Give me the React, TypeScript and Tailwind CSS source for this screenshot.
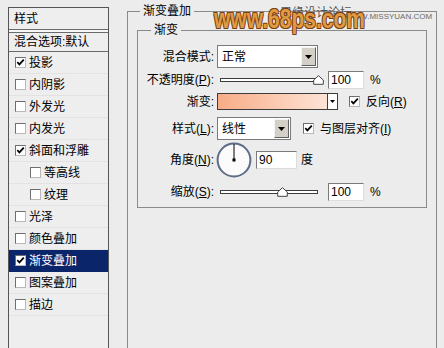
const items = [
  { t: "投影", on: true },
  { t: "内阴影" },
  { t: "外发光" },
  { t: "内发光" },
  { t: "斜面和浮雕", on: true },
  { t: "等高线", sub: true },
  { t: "纹理", sub: true },
  { t: "光泽" },
  { t: "颜色叠加" },
  { t: "渐变叠加", on: true, sel: true },
  { t: "图案叠加" },
  { t: "描边" },
];

const Check = ({ on }: { on?: boolean }) => (
  <span className="w-[11px] h-[11px] shrink-0 bg-white border border-t-[#6e6e6e] border-l-[#6e6e6e] border-r-[#b8b8b8] border-b-[#b8b8b8] flex items-center justify-center">
    {on && (
      <svg width="9" height="9" viewBox="0 0 9 9">
        <path d="M1.3 4.2 L3.4 6.4 L7.8 1.6" fill="none" stroke="#000" strokeWidth="1.7" />
      </svg>
    )}
  </span>
);

const Arrow = () => (
  <svg width="7" height="4" viewBox="0 0 7 4">
    <path d="M0 0 H7 L3.5 4 Z" fill="#000" />
  </svg>
);

const Select = ({ value, w }: { value: string; w: string }) => (
  <div className={`${w} h-[23px] bg-white border border-[#7a7a7a] flex items-center justify-between`}>
    <span className="pl-[4px]">{value}</span>
    <span className="w-[15px] h-[19px] mr-[1px] bg-[#d4d0c8] border border-t-[#f4f4f4] border-l-[#f4f4f4] border-r-[#606060] border-b-[#606060] flex items-center justify-center">
      <Arrow />
    </span>
  </div>
);

const Slider = ({ pos }: { pos: number }) => (
  <div className="relative w-[106px] h-[12px] flex items-center shrink-0">
    <div className="ml-[3px] w-[98px] h-[4px] bg-white border border-[#3c3c3c]" />
    <svg className="absolute top-[1px]" style={{ left: pos - 5 }} width="11" height="10" viewBox="0 0 11 10">
      <path d="M5.5 0.7 L10.3 5 V9.3 H0.7 V5 Z" fill="#fff" stroke="#444" strokeWidth="1" />
    </svg>
  </div>
);

const Field = ({ value, w }: { value: string; w: string }) => (
  <div className={`${w} h-[18px] bg-white border border-t-[#7a7a7a] border-l-[#7a7a7a] border-r-[#dcdcdc] border-b-[#dcdcdc] flex items-center pl-[2px] leading-[14px]`}>
    {value}
  </div>
);

const Label = ({ children }: { children: React.ReactNode }) => (
  <span className="w-[76px] mr-[3px] shrink-0 text-right">{children}</span>
);

export default function App() {
  return (
    <div className="relative w-[444px] h-[348px] overflow-hidden bg-[#ececec] flex items-start text-[12px] leading-[14px] text-black font-['Liberation_Sans','Noto_Sans_CJK_SC',sans-serif]">
      {/* style list */}
      <div className="ml-[8px] mt-[7px] w-[101px] h-[360px] shrink-0 bg-[#eeeeee] border border-[#555555] flex flex-col">
        <div className="h-[21px] flex items-center pl-[5px]">样式</div>
        <div className="h-[4px] bg-[#f6f6f6] border-y border-[#6a6a6a]" />
        <div className="h-[19px] flex items-center pl-[5px] border-b border-[#6a6a6a]">混合选项:默认</div>
        {items.map((it) => (
          <div
            key={it.t}
            className={`h-[22px] flex items-center gap-[3px] border-b ${
              it.sel ? "bg-[#0b256b] text-white border-[#0b256b]" : "border-[#e2e2e2]"
            } ${it.sub ? "pl-[21px]" : "pl-[6px]"}`}
          >
            <Check on={it.on} />
            <span>{it.t}</span>
          </div>
        ))}
      </div>

      {/* settings */}
      <fieldset className="ml-[18px] mt-[4px] w-[310px] h-[360px] shrink-0 border border-[#8a8a8a] px-[9px]">
        <legend className="ml-[3px] px-[3px] leading-[14px]">渐变叠加</legend>
        <fieldset className="mt-[5px] border border-[#8a8a8a] pt-[8px] pb-[7px] flex flex-col">
          <legend className="ml-[13px] px-[3px] leading-[14px]">渐变</legend>

          <div className="h-[23px] flex items-center">
            <Label>混合模式:</Label>
            <Select value="正常" w="w-[101px]" />
          </div>

          <div className="mt-[2px] h-[19px] flex items-center">
            <Label>
              不透明度(<span className="underline">P</span>):
            </Label>
            <Slider pos={101} />
            <span className="ml-[5px]">
              <Field value="100" w="w-[36px]" />
            </span>
            <span className="ml-[6px]">%</span>
          </div>

          <div className="mt-[4px] h-[17px] flex items-center">
            <Label>渐变:</Label>
            <div className="w-[121px] h-[17px] border border-[#3c3c3c] flex">
              <div className="flex-1 bg-gradient-to-r from-[#f7ac87] to-[#fde3d5]" />
              <div className="w-[10px] bg-white border-l border-[#3c3c3c] flex items-center justify-center">
                <svg width="5" height="3" viewBox="0 0 5 3">
                  <path d="M0 0 H5 L2.5 3 Z" fill="#000" />
                </svg>
              </div>
            </div>
            <span className="ml-[11px]">
              <Check on />
            </span>
            <span className="ml-[6px]">
              反向(<span className="underline">R</span>)
            </span>
          </div>

          <div className="mt-[7px] h-[23px] flex items-center">
            <Label>
              样式(<span className="underline">L</span>):
            </Label>
            <Select value="线性" w="w-[74px]" />
            <span className="ml-[12px]">
              <Check on />
            </span>
            <span className="ml-[6px]">
              与图层对齐(<span className="underline">I</span>)
            </span>
          </div>

          <div className="mt-[2px] h-[36px] flex items-center">
            <Label>
              角度(<span className="underline">N</span>):
            </Label>
            <svg width="36" height="36" viewBox="0 0 36 36" className="shrink-0 -ml-[1px]">
              <circle cx="18" cy="18" r="16.4" fill="#fbfbfb" stroke="#5e6c88" strokeWidth="2" />
              <line x1="18" y1="18" x2="18" y2="2" stroke="#000" strokeWidth="1" />
              <rect x="16.5" y="16.5" width="3" height="3" fill="#000" />
            </svg>
            <span className="ml-[4px]">
              <Field value="90" w="w-[41px]" />
            </span>
            <span className="ml-[4px]">度</span>
          </div>

          <div className="mt-[5px] h-[17px] flex items-center">
            <Label>
              缩放(<span className="underline">S</span>):
            </Label>
            <Slider pos={65} />
            <span className="ml-[5px]">
              <Field value="100" w="w-[36px]" />
            </span>
            <span className="ml-[6px]">%</span>
          </div>
        </fieldset>
      </fieldset>

      {/* watermark */}
      <div className="absolute left-[280px] top-[6px] text-[12px] text-[#555555]">思缘设计论坛</div>
      <div className="absolute left-[345px] top-[12px] text-[8px] leading-[9px] text-[#6a6a6a]">WWW.MISSYUAN.COM</div>
      <div className="absolute left-[214px] top-[5px] origin-left scale-x-[0.75] text-[28px] leading-[28px] font-bold text-[#df9a45] [text-shadow:1px_1px_0_#7a3f10,-1px_-1px_0_#7a3f10,1px_-1px_0_#7a3f10,-1px_1px_0_#7a3f10]">
        www.68ps.com
      </div>
    </div>
  );
}
